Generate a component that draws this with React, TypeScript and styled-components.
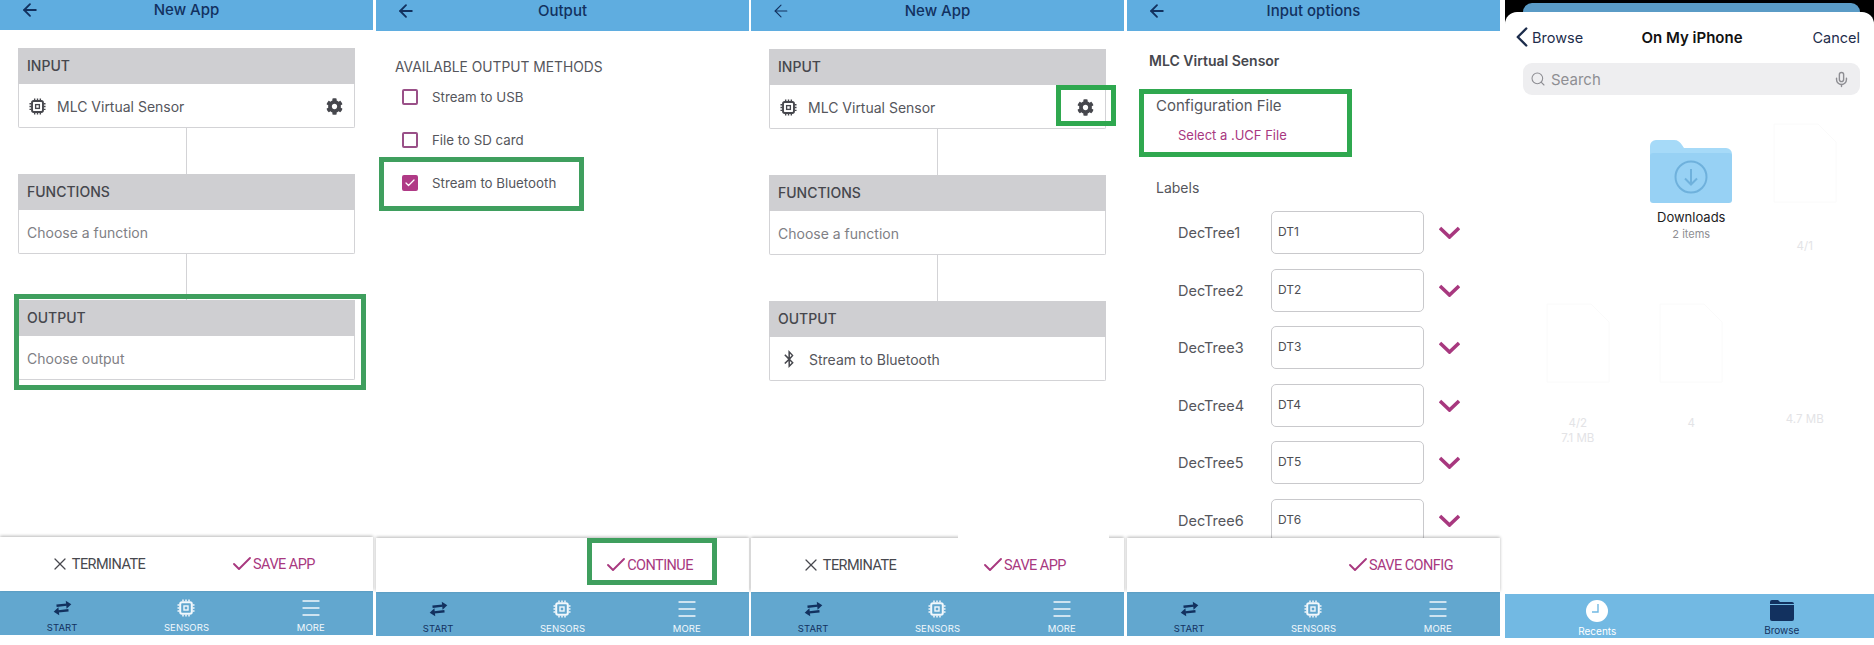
import React from 'react';
import styled, { createGlobalStyle } from 'styled-components';
import { ArrowLeft, Check, ChevronLeft, Menu, Mic, Search, X } from 'lucide-react';
import { FaBluetoothB, FaCog } from 'react-icons/fa';

const NAVY = '#12315f';
const PINK = '#a8387f';
const GREEN_DULL = '#3f9f5e';
const GREEN_BRIGHT = '#2fa84f';

const GlobalStyle = createGlobalStyle`
  html, body {
    margin: 0;
    background: #fff;
    overflow: hidden;
  }
  * {
    box-sizing: border-box;
  }
  body {
    font-family: Inter, "Liberation Sans", sans-serif;
  }
`;

const Page = styled.div`
  display: flex;
  align-items: flex-start;
  width: 1874px;
  height: 645px;
  background: #fff;
`;

const Panel = styled.section<{ $compact?: boolean; $offset?: number }>`
  position: relative;
  display: flex;
  flex-direction: column;
  flex: none;
  width: 373px;
  height: ${p => (p.$compact ? 635 : 636)}px;
  margin-left: ${p => p.$offset ?? 0}px;
`;

const Header = styled.header<{ $compact?: boolean }>`
  display: grid;
  grid-template-columns: 60px 1fr 60px;
  align-items: center;
  flex: none;
  height: ${p => (p.$compact ? 30 : 31)}px;
  padding-bottom: 10px;
  background: #5fade0;
  color: ${NAVY};
  svg {
    margin-left: 20px;
  }
`;

const HeaderTitle = styled.h1`
  margin: 0;
  font-size: 15px;
  font-weight: 500;
  line-height: 20px;
  text-align: center;
  white-space: nowrap;
`;

const Content = styled.div`
  flex: 1;
  min-height: 0;
  overflow: hidden;
`;

const FlowContent = styled(Content)`
  padding: 18px 18px 0;
`;

const Card = styled.div`
  position: relative;
`;

const CardHeader = styled.div`
  height: 36px;
  padding-left: 9px;
  background: #cfcfd2;
  color: #46474d;
  font-size: 14px;
  font-weight: 500;
  line-height: 36px;
`;

const CardBody = styled.div`
  position: relative;
  display: flex;
  align-items: center;
  height: 44px;
  padding: 1px 11px 0 10px;
  border: 1px solid #d3d3d6;
  border-top: 0;
  border-radius: 0 0 2px 2px;
`;

const CardText = styled.span<{ $muted?: boolean }>`
  margin-left: ${p => (p.$muted ? -2 : 11)}px;
  color: ${p => (p.$muted ? '#808085' : '#55565c')};
  font-size: 14px;
  white-space: nowrap;
`;

const CardAction = styled.span`
  display: flex;
  margin-left: auto;
  color: #46474d;
`;

const Connector = styled.div`
  width: 1px;
  height: 46px;
  margin: 0 auto;
  background: #d3d3d6;
`;

const Highlight = styled.div<{ $inset: string; $bright?: boolean }>`
  position: absolute;
  inset: ${p => p.$inset};
  z-index: 2;
  border: 5px solid ${p => (p.$bright ? GREEN_BRIGHT : GREEN_DULL)};
  pointer-events: none;
`;

const ActionBar = styled.div`
  position: relative;
  z-index: 1;
  display: grid;
  grid-template-columns: 175px 175px;
  flex: none;
  height: 54px;
  padding-left: 10px;
  background: #fff;
  box-shadow: 0 -1px 3px rgba(0, 0, 0, 0.28);
`;

const ActionButton = styled.div<{ $primary?: boolean }>`
  position: relative;
  grid-column: ${p => (p.$primary ? 2 : 1)};
  display: flex;
  align-items: center;
  justify-self: center;
  color: ${p => (p.$primary ? PINK : '#47484e')};
  font-family: Roboto, sans-serif;
  font-size: 14.5px;
  font-weight: 400;
  letter-spacing: -0.55px;
  white-space: nowrap;
  svg {
    margin-right: ${p => (p.$primary ? -1 : 2)}px;
  }
`;

const BottomNav = styled.nav`
  display: grid;
  grid-template-columns: repeat(3, 1fr);
  flex: none;
  height: 44px;
  background: #62a7cf;
`;

const NavItem = styled.div<{ $active?: boolean }>`
  display: flex;
  flex-direction: column;
  align-items: center;
  padding-top: 6px;
  color: ${p => (p.$active ? NAVY : '#f2f8fc')};
  font-size: 9.5px;
  line-height: 11px;
  letter-spacing: 0.1px;
`;

const NavIcon = styled.span`
  display: flex;
  align-items: center;
  justify-content: center;
  height: 22px;
  margin-bottom: 3px;
`;

const GhostPatch = styled.div`
  position: absolute;
  z-index: 3;
  top: 534px;
  left: 207px;
  width: 151px;
  height: 5px;
  background: #fff;
`;

const MethodList = styled(Content)`
  padding: 26px 0 0 19px;
`;

const MethodsTitle = styled.h2`
  margin: 0 0 -2px;
  color: #55565c;
  font-size: 13.8px;
  font-weight: 400;
  line-height: 20px;
  white-space: nowrap;
`;

const MethodRow = styled.div`
  position: relative;
  display: flex;
  align-items: center;
  gap: 14px;
  width: 180px;
  height: 43px;
  padding-left: 7px;
  color: #55565c;
  font-size: 13.3px;
  white-space: nowrap;
`;

const CheckBox = styled.span<{ $checked?: boolean }>`
  display: flex;
  align-items: center;
  justify-content: center;
  flex: none;
  width: 16px;
  height: 16px;
  border: 2px solid ${p => (p.$checked ? '#b03a86' : '#9a5088')};
  border-radius: 2px;
  background: ${p => (p.$checked ? '#b03a86' : '#fff')};
  color: #fff;
`;

const OptionsContent = styled(Content)`
  padding: 20px 0 0 22px;
`;

const OptionsTitle = styled.h2`
  margin: 0;
  color: #46474d;
  font-size: 14px;
  font-weight: 600;
  line-height: 20px;
`;

const ConfigBlock = styled.div`
  position: relative;
  margin: 25px 0 0 7px;
`;

const ConfigTitle = styled.div`
  color: #55565c;
  font-size: 15px;
  line-height: 20px;
`;

const ConfigLink = styled.div`
  margin-top: 10px;
  padding-left: 22px;
  color: ${PINK};
  font-size: 13px;
  line-height: 18px;
`;

const LabelsTitle = styled(ConfigTitle)`
  margin: 34px 0 13px 7px;
  font-size: 14px;
`;

const LabelRows = styled.div`
  display: flex;
  flex-direction: column;
  gap: 14.6px;
  margin-left: 29px;
`;

const LabelRow = styled.div`
  display: grid;
  grid-template-columns: 93px 153px 36px;
  align-items: center;
  color: #55565c;
  font-size: 14.5px;
`;

const LabelInput = styled.div`
  height: 43px;
  padding: 10px 6px;
  border: 1px solid #c9c9cc;
  border-radius: 5px;
  color: #4d4e54;
  font-size: 12px;
  line-height: 20px;
`;

const Chevron = styled.svg`
  display: block;
  margin-left: 15px;
  color: ${PINK};
`;

const PickerPanel = styled.section`
  display: flex;
  flex-direction: column;
  flex: none;
  width: 369px;
  height: 638px;
  margin-left: 5px;
  background: #000;
`;

const BackdropStrip = styled.div`
  flex: none;
  height: 12px;
  padding: 3px 14px 0 18px;
`;

const BackdropBar = styled.div`
  height: 9px;
  border-radius: 9px 9px 0 0;
  background: #5a9bc6;
`;

const Sheet = styled.div`
  flex: 1;
  min-height: 0;
  overflow: hidden;
  border-radius: 12px 12px 0 0;
  background: #fff;
`;

const SheetHeader = styled.div`
  display: grid;
  grid-template-columns: 1fr auto 1fr;
  align-items: center;
  height: 50px;
  padding: 0 14px 0 19px;
  color: #1d2d4c;
  font-size: 14.5px;
`;

const BackLink = styled.div`
  display: flex;
  align-items: center;
  svg {
    margin: 0 -7px 0 -19px;
  }
`;

const SheetTitle = styled.div`
  color: #111;
  font-size: 15px;
  font-weight: 600;
`;

const CancelLink = styled.div`
  justify-self: end;
`;

const SearchBar = styled.div`
  display: flex;
  align-items: center;
  gap: 5px;
  height: 32px;
  margin: 1px 14px 0 18px;
  padding: 0 10px 0 7px;
  border-radius: 9px;
  background: #eeeef0;
  color: #8e8e93;
  font-size: 15px;
`;

const MicSlot = styled.span`
  display: flex;
  margin-left: auto;
  color: #8e8e93;
`;

const FileGrid = styled.div`
  display: grid;
  grid-template-columns: repeat(3, 113.5px);
  grid-auto-rows: 180px;
  padding: 18px 0 0 16px;
`;

const FileCell = styled.div`
  display: flex;
  flex-direction: column;
  align-items: center;
`;

const Thumb = styled.div`
  display: flex;
  align-items: flex-end;
  justify-content: center;
  width: 100%;
  height: 90px;
`;

const FileName = styled.div`
  margin-top: 6px;
  color: #1b1b1d;
  font-size: 13px;
  line-height: 16px;
`;

const FileMeta = styled.div`
  margin-top: 2px;
  color: #8e8e93;
  font-size: 11px;
  line-height: 15px;
`;

const GhostText = styled.div<{ $gap?: number }>`
  margin-top: ${p => p.$gap ?? 0}px;
  color: #e3e3e6;
  font-size: 11.5px;
  line-height: 15px;
`;

const PickerNav = styled.nav`
  display: grid;
  grid-template-columns: 1fr 1fr;
  flex: none;
  height: 44px;
  background: #72b9e3;
`;

const PickerTab = styled.div<{ $active?: boolean }>`
  display: flex;
  flex-direction: column;
  align-items: center;
  padding-top: 6px;
  color: ${p => (p.$active ? '#fff' : NAVY)};
  font-size: 10px;
  line-height: 12px;
  svg {
    display: block;
    margin-bottom: 3px;
  }
`;

const ChipIcon: React.FC<{ size: number; color: string }> = ({ size, color }) => (
  <svg width={size} height={size} viewBox="0 0 18 18" fill="none" stroke={color}>
    <rect x="3.2" y="3.2" width="11.6" height="11.6" rx="1.8" strokeWidth="2" />
    <rect x="7" y="7" width="4" height="4" strokeWidth="1.4" />
    <path d="M6 0.5v2M9 0.5v2M12 0.5v2M6 15.5v2M9 15.5v2M12 15.5v2M0.5 6h2M0.5 9h2M0.5 12h2M15.5 6h2M15.5 9h2M15.5 12h2" strokeWidth="1.5" />
  </svg>
);

const SwapIcon = () => (
  <svg width="21" height="16" viewBox="0 0 18 14" fill={NAVY} stroke={NAVY}>
    <g transform="rotate(-6 9 7)">
      <path d="M4 4.5h9" strokeWidth="2" />
      <path d="M12.5 1l4.5 3.5-4.5 3.5z" strokeWidth="0" />
      <path d="M14 9.5H5" strokeWidth="2" />
      <path d="M5.5 6l-4.5 3.5 4.5 3.5z" strokeWidth="0" />
    </g>
  </svg>
);

const Tabs = () => (
  <BottomNav>
    <NavItem $active>
      <NavIcon>
        <SwapIcon />
      </NavIcon>
      START
    </NavItem>
    <NavItem>
      <NavIcon>
        <ChipIcon size={18} color="#f2f8fc" />
      </NavIcon>
      SENSORS
    </NavItem>
    <NavItem>
      <NavIcon>
        <Menu size={24} strokeWidth={1.3} />
      </NavIcon>
      MORE
    </NavItem>
  </BottomNav>
);

const TopBar: React.FC<{ title: string; compact?: boolean; thinArrow?: boolean }> = ({ title, compact, thinArrow }) => (
  <Header $compact={compact}>
    <ArrowLeft size={20} strokeWidth={thinArrow ? 1.3 : 2.2} />
    <HeaderTitle>{title}</HeaderTitle>
  </Header>
);

const Terminate = () => (
  <ActionButton>
    <X size={20} strokeWidth={1.5} />
    TERMINATE
  </ActionButton>
);

const Confirm: React.FC<{ label: string; children?: React.ReactNode }> = ({ label, children }) => (
  <ActionButton $primary>
    <Check size={24} strokeWidth={1.9} />
    {label}
    {children}
  </ActionButton>
);

const SensorRow: React.FC<{ children?: React.ReactNode }> = ({ children }) => (
  <CardBody>
    <ChipIcon size={17} color="#46474d" />
    <CardText>MLC Virtual Sensor</CardText>
    <CardAction>
      <FaCog size={17} />
    </CardAction>
    {children}
  </CardBody>
);

const methods = ['Stream to USB', 'File to SD card', 'Stream to Bluetooth'];
const labels = ['DecTree1', 'DecTree2', 'DecTree3', 'DecTree4', 'DecTree5', 'DecTree6'];

const DocThumb = () => (
  <svg width="64" height="80" viewBox="0 0 64 80" fill="none" stroke="#fafafa">
    <path d="M1 1h44l18 18v60H1z" />
  </svg>
);

const App: React.FC = () => (
  <Page>
    <GlobalStyle />

    <Panel $compact>
      <TopBar title="New App" compact />
      <FlowContent>
        <Card>
          <CardHeader>INPUT</CardHeader>
          <SensorRow />
        </Card>
        <Connector />
        <Card>
          <CardHeader>FUNCTIONS</CardHeader>
          <CardBody>
            <CardText $muted>Choose a function</CardText>
          </CardBody>
        </Card>
        <Connector />
        <Card>
          <CardHeader>OUTPUT</CardHeader>
          <CardBody>
            <CardText $muted>Choose output</CardText>
          </CardBody>
        </Card>
      </FlowContent>
      <Highlight $inset="294px 7px 245px 14px" />
      <ActionBar>
        <Terminate />
        <Confirm label="SAVE APP" />
      </ActionBar>
      <Tabs />
    </Panel>

    <Panel $offset={3}>
      <TopBar title="Output" />
      <MethodList>
        <MethodsTitle>AVAILABLE OUTPUT METHODS</MethodsTitle>
        {methods.map((method, i) => (
          <MethodRow key={method}>
            <CheckBox $checked={i === 2}>{i === 2 && <Check size={12} strokeWidth={2.5} />}</CheckBox>
            {method}
            {i === 2 && <Highlight $inset="-4px -9px -7px -16px" />}
          </MethodRow>
        ))}
      </MethodList>
      <ActionBar>
        <Confirm label="CONTINUE">
          <Highlight $inset="0 -24px 7px -17px" />
        </Confirm>
      </ActionBar>
      <Tabs />
    </Panel>

    <Panel $offset={2}>
      <TopBar title="New App" thinArrow />
      <FlowContent>
        <Card>
          <CardHeader>INPUT</CardHeader>
          <SensorRow>
            <Highlight $inset="0 -11px 2px 286px" $bright />
          </SensorRow>
        </Card>
        <Connector />
        <Card>
          <CardHeader>FUNCTIONS</CardHeader>
          <CardBody>
            <CardText $muted>Choose a function</CardText>
          </CardBody>
        </Card>
        <Connector />
        <Card>
          <CardHeader>OUTPUT</CardHeader>
          <CardBody>
            <FaBluetoothB size={18} color="#46474d" />
            <CardText>Stream to Bluetooth</CardText>
          </CardBody>
        </Card>
      </FlowContent>
      <ActionBar>
        <Terminate />
        <Confirm label="SAVE APP" />
      </ActionBar>
      <GhostPatch />
      <Tabs />
    </Panel>

    <Panel $offset={3}>
      <TopBar title="Input options" />
      <OptionsContent>
        <OptionsTitle>MLC Virtual Sensor</OptionsTitle>
        <ConfigBlock>
          <ConfigTitle>Configuration File</ConfigTitle>
          <ConfigLink>Select a .UCF File</ConfigLink>
          <Highlight $inset="-7px 148px -13px -17px" $bright />
        </ConfigBlock>
        <LabelsTitle>Labels</LabelsTitle>
        <LabelRows>
          {labels.map((label, i) => (
            <LabelRow key={label}>
              {label}
              <LabelInput>{`DT${i + 1}`}</LabelInput>
              <Chevron width="21" height="13" viewBox="0 0 21 13" fill="none" stroke="currentColor" strokeWidth="3.6">
                <path d="M1 2 L10.5 11 L20 2" />
              </Chevron>
            </LabelRow>
          ))}
        </LabelRows>
      </OptionsContent>
      <ActionBar>
        <Confirm label="SAVE CONFIG" />
      </ActionBar>
      <Tabs />
    </Panel>

    <PickerPanel>
      <BackdropStrip>
        <BackdropBar />
      </BackdropStrip>
      <Sheet>
        <SheetHeader>
          <BackLink>
            <ChevronLeft size={34} strokeWidth={1.7} />
            Browse
          </BackLink>
          <SheetTitle>On My iPhone</SheetTitle>
          <CancelLink>Cancel</CancelLink>
        </SheetHeader>
        <SearchBar>
          <Search size={16} strokeWidth={1.6} />
          Search
          <MicSlot>
            <Mic size={17} />
          </MicSlot>
        </SearchBar>
        <FileGrid>
          <FileCell>
            <Thumb />
          </FileCell>
          <FileCell>
            <Thumb>
              <svg width="82" height="63" viewBox="0 0 82 63">
                <path d="M0 6a6 6 0 0 1 6-6h18c4 0 6 2 8 5l2 3h42a6 6 0 0 1 6 6v20H0z" fill="#a6daf8" />
                <path d="M0 16a3 3 0 0 1 3-3h76a3 3 0 0 1 3 3v44a3 3 0 0 1-3 3H3a3 3 0 0 1-3-3z" fill="#97d1f4" />
                <circle cx="41" cy="37" r="15.5" fill="none" stroke="#6fb1dc" strokeWidth="2" />
                <path d="M41 29v15M35 38.5l6 6 6-6" fill="none" stroke="#6fb1dc" strokeWidth="2" />
              </svg>
            </Thumb>
            <FileName>Downloads</FileName>
            <FileMeta>2 items</FileMeta>
          </FileCell>
          <FileCell>
            <Thumb>
              <DocThumb />
            </Thumb>
            <GhostText $gap={36}>4/1</GhostText>
          </FileCell>
          <FileCell>
            <Thumb>
              <DocThumb />
            </Thumb>
            <GhostText $gap={33}>4/2</GhostText>
            <GhostText>7.1 MB</GhostText>
          </FileCell>
          <FileCell>
            <Thumb>
              <DocThumb />
            </Thumb>
            <GhostText $gap={33}>4</GhostText>
          </FileCell>
          <FileCell>
            <Thumb />
            <GhostText $gap={29}>4.7 MB</GhostText>
          </FileCell>
        </FileGrid>
      </Sheet>
      <PickerNav>
        <PickerTab $active>
          <svg width="22" height="22" viewBox="0 0 22 22">
            <circle cx="11" cy="11" r="11" fill="#fff" />
            <path d="M12 4v8H6" fill="none" stroke="#72b9e3" strokeWidth="1.4" />
          </svg>
          Recents
        </PickerTab>
        <PickerTab>
          <svg width="24" height="21" viewBox="0 0 24 21" fill={NAVY}>
            <path d="M0 2a2 2 0 0 1 2-2h6l2 2h12a2 2 0 0 1 2 2H0z" />
            <path d="M0 5h24v14a2 2 0 0 1-2 2H2a2 2 0 0 1-2-2z" />
          </svg>
          Browse
        </PickerTab>
      </PickerNav>
    </PickerPanel>
  </Page>
);

export default App;
